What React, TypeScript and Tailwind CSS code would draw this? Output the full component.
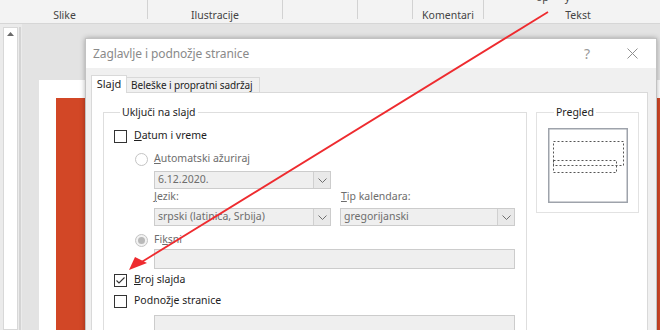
import React from "react";

function Chevron() {
  return (
    <svg width="9" height="5" viewBox="0 0 9 5">
      <path d="M0.5 0.5 L4.5 4.5 L8.5 0.5" fill="none" stroke="#6e6e6e" strokeWidth="1" />
    </svg>
  );
}

function Select({ value, className }: { value: string; className: string }) {
  return (
    <div className={className}>
      <div className="flex flex-1 items-center pl-[3px] text-[#6d6d6d]">{value}</div>
      <div className="flex w-[17px] items-center justify-center border-l border-[#d0d0d0] bg-[#e9e9e9]">
        <Chevron />
      </div>
    </div>
  );
}

function Checkbox({ checked }: { checked?: boolean }) {
  return (
    <div className="flex h-[13px] w-[13px] shrink-0 items-center justify-center border border-[#333333] bg-white">
      {checked && (
        <svg width="11" height="11" viewBox="0 0 11 11">
          <path d="M1.5 5.5 L4 8 L9.5 2.5" fill="none" stroke="#333333" strokeWidth="1.1" />
        </svg>
      )}
    </div>
  );
}

function Radio({ selected }: { selected?: boolean }) {
  return (
    <div
      className={
        selected
          ? "flex h-[13px] w-[13px] shrink-0 items-center justify-center rounded-full border border-[#c4c4c4] bg-[#f2f2f2]"
          : "flex h-[13px] w-[13px] shrink-0 items-center justify-center rounded-full border border-[#c4c4c4] bg-white"
      }
    >
      {selected && <div className="h-[7px] w-[7px] rounded-full bg-[#b9b9b9]" />}
    </div>
  );
}

export default function App() {
  return (
    <div className="relative h-[330px] w-[660px] overflow-hidden bg-[#e6e6e6] font-['Noto_Sans',sans-serif] text-[10.5px] text-[#1e1e1e]">
      {/* Ribbon */}
      <div className="flex h-[24px] border-b border-[#d6d6d6] bg-[#f3f3f3] text-[#444444]">
        <div className="flex w-[147px] items-end justify-center pb-[1px] pr-[18px] leading-[14px]">Slike</div>
        <div className="h-[19px] w-px bg-[#d2d2d2]" />
        <div className="flex w-[134px] items-end justify-center pb-[1px] leading-[14px]">Ilustracije</div>
        <div className="h-[19px] w-px bg-[#d2d2d2]" />
        <div className="w-[74px]" />
        <div className="h-[19px] w-px bg-[#d2d2d2]" />
        <div className="w-[54px]" />
        <div className="h-[19px] w-px bg-[#d2d2d2]" />
        <div className="flex w-[70px] items-end justify-center pb-[1px] leading-[14px]">Komentari</div>
        <div className="h-[19px] w-px bg-[#d2d2d2]" />
        <div className="flex flex-1 flex-col">
          <div className="h-[4px] overflow-hidden pl-[52px]">
            <div className="-mt-[10px] flex gap-[16px] leading-[14px]">
              <span>op</span>
              <span>y</span>
            </div>
          </div>
          <div className="flex flex-1 items-end justify-center pb-[1px] pl-[12px] leading-[14px]">Tekst</div>
        </div>
      </div>

      {/* Work area */}
      <div className="flex h-[306px]">
        <div className="flex w-[22px] bg-[#ebebeb] pl-[3px] pt-[3px]">
          <div className="flex h-full w-[15px] justify-center border border-[#d8d8d8] bg-white pt-[4px]">
            <svg width="7" height="4" viewBox="0 0 7 4">
              <path d="M0 4 L3.5 0 L7 4 Z" fill="#6a6a6a" />
            </svg>
          </div>
          <div className="ml-[1px] h-full w-[2px] bg-[#d4d4d4]" />
        </div>
        <div className="flex flex-1 bg-[#e3e3e3] pl-[17px] pt-[56px]">
          <div className="flex flex-1 bg-white pl-[17px] pt-[18px]">
            <div className="flex-1 bg-[#d24726]" />
          </div>
        </div>
      </div>

      {/* Dialog */}
      <div className="absolute left-[85px] top-[38px] flex w-[572px] flex-col border border-[#c2c2c2] bg-[#f0f0f0] shadow-[0_0_5px_rgba(0,0,0,0.3)]">
        <div className="flex h-[29px] shrink-0 items-center bg-white">
          <div className="flex-1 pl-[7px] text-[12px] tracking-[-0.1px] text-[#8a8a8a]">Zaglavlje i podnožje stranice</div>
          <div className="flex w-[46px] justify-center text-[14px] text-[#9a9a9a]">?</div>
          <div className="flex w-[46px] justify-center pr-[2px]">
            <svg width="11" height="11" viewBox="0 0 11 11">
              <path d="M0.5 0.5 L10.5 10.5 M10.5 0.5 L0.5 10.5" stroke="#8f8f8f" strokeWidth="1" />
            </svg>
          </div>
        </div>
        <div className="flex flex-col pl-[5px]">
          <div className="flex h-[24px] shrink-0 items-end">
            <div className="relative z-10 -mb-px flex h-[18px] w-[36px] items-start justify-center border border-b-0 border-[#d9d9d9] bg-white pt-[1px] text-[11px] leading-[14px]">
              Slajd
            </div>
            <div className="flex h-[15px] w-[133px] items-center whitespace-nowrap border-r border-t border-[#d9d9d9] bg-[#f0f0f0] pl-[4px] text-[10px] tracking-[-0.1px] leading-[14px]">
              Beleške i propratni sadržaj
            </div>
          </div>
          <div className="flex w-[557px] gap-[9px] border border-[#d9d9d9] bg-white pl-[11px] pt-[11px]">
            {/* Uključi na slajd */}
            <fieldset className="h-[300px] w-[424px] border border-[#dedede] pl-[10px]">
              <legend className="ml-[6px] px-[2px] leading-[16px]">Uključi na slajd</legend>
              <div className="mt-[8px] flex h-[16px] items-center gap-[7px]">
                <Checkbox />
                <span><span className="underline">D</span>atum i vreme</span>
              </div>
              <div className="mt-[7px] flex h-[16px] items-center gap-[6px] pl-[21px] text-[#6d6d6d]">
                <Radio />
                <span><span className="underline">A</span>utomatski ažuriraj</span>
              </div>
              <div className="mt-[4px] pl-[40px]">
                <Select value="6.12.2020." className="flex h-[18px] w-[177px] border border-[#cccccc] bg-[#efefef]" />
              </div>
              <div className="flex h-[16px] items-center gap-[10px] pl-[40px] text-[#6d6d6d]">
                <span className="w-[177px]"><span className="underline">J</span>ezik:</span>
                <span><span className="underline">T</span>ip kalendara:</span>
              </div>
              <div className="mt-[3px] flex gap-[9px] pl-[40px]">
                <Select value="srpski (latinica, Srbija)" className="flex h-[18px] w-[177px] border border-[#cccccc] bg-[#efefef]" />
                <Select value="gregorijanski" className="flex h-[18px] w-[175px] border border-[#cccccc] bg-[#efefef]" />
              </div>
              <div className="mt-[6px] flex h-[16px] items-center gap-[6px] pl-[21px] text-[#6d6d6d]">
                <Radio selected />
                <span>Fi<span className="underline">k</span>sni</span>
              </div>
              <div className="mt-[1px] pl-[40px]">
                <div className="h-[20px] w-[361px] border border-[#cccccc] bg-[#efefef]" />
              </div>
              <div className="mt-[3px] flex h-[16px] items-center gap-[7px]">
                <Checkbox checked />
                <span><span className="underline">B</span>roj slajda</span>
              </div>
              <div className="mt-[5px] flex h-[16px] items-center gap-[7px]">
                <Checkbox />
                <span>Podnož<span className="underline">j</span>e stranice</span>
              </div>
              <div className="mt-[6px] pl-[40px]">
                <div className="h-[20px] w-[361px] border border-[#cccccc] bg-[#efefef]" />
              </div>
            </fieldset>

            {/* Pregled */}
            <fieldset className="h-[109px] w-[103px] border border-[#e2e2e2] pl-[11px] pt-[8px]">
              <legend className="ml-[6px] px-[2px] leading-[16px]">Pregled</legend>
              <svg width="80" height="75" viewBox="0 0 80 75">
                <rect x="0.75" y="0.75" width="78.5" height="73.5" fill="white" stroke="#9ea3ab" strokeWidth="1.5" />
                <rect x="5.5" y="13.5" width="70" height="24" fill="none" stroke="#555555" strokeWidth="1" strokeDasharray="2 2" />
                <rect x="5.5" y="32.5" width="63" height="12" fill="none" stroke="#555555" strokeWidth="1" strokeDasharray="2 2" />
              </svg>
            </fieldset>
          </div>
        </div>
      </div>

      {/* Red arrow */}
      <svg className="pointer-events-none absolute left-0 top-0 z-20" width="660" height="330" viewBox="0 0 660 330">
        <line x1="548" y1="12" x2="140" y2="263" stroke="#ee2b2f" strokeWidth="1.8" />
        <polygon points="129,270 135,257 147,263" fill="#ee2b2f" />
      </svg>
    </div>
  );
}
